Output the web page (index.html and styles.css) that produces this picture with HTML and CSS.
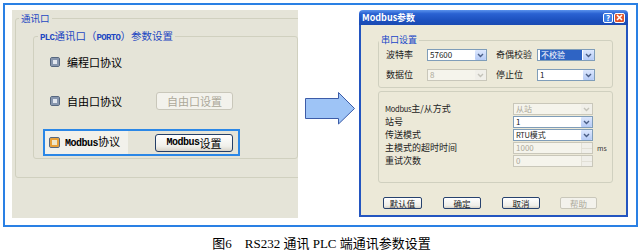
FILE: index.html
```html
<!DOCTYPE html>
<html lang="zh">
<head>
<meta charset="utf-8">
<title>RS232通讯PLC端通讯参数设置</title>
<link rel="stylesheet" href="styles.css">
</head>
<body>
<div class="frame">
  <div class="panel">
    <fieldset class="grp-outer">
      <legend>通讯口</legend>
      <fieldset class="grp-inner">
        <legend><span class="lat">PLC</span>通讯口（<span class="lat">PORTO</span>）参数设置</legend>
        <div class="row r1">
          <div class="chkcol"><span class="chk"></span><span class="lbl">编程口协议</span></div>
        </div>
        <div class="row r2">
          <div class="chkcol"><span class="chk"></span><span class="lbl">自由口协议</span></div>
          <div class="btn dis">自由口设置</div>
        </div>
        <div class="row r3">
          <div class="chkcol lite"><span class="chk hot"></span><span class="lbl"><b class="mono">Modbus</b>协议</span></div>
          <div class="btn act"><b class="mono">Modbus</b>设置</div>
        </div>
      </fieldset>
    </fieldset>
  </div>
  <div class="arrowcol">
    <svg width="51" height="33" viewBox="0 0 51 33">
      <polygon points="0.5,6.5 33.5,6.5 33.5,0.5 49.5,16.5 33.5,32 33.5,26.5 0.5,26.5" fill="#9EC4F6" stroke="#3C5CA8" stroke-width="1"/>
    </svg>
  </div>
  <div class="dlg">
    <div class="title">
      <span class="tt">Modbus参数</span>
      <span class="tb help">?</span>
      <span class="tb close"><svg width="7" height="7" viewBox="0 0 7 7"><path d="M1 1 L6 6 M6 1 L1 6" stroke="#fff" stroke-width="1.6"/></svg></span>
    </div>
    <div class="body">
      <fieldset class="g1">
        <legend>串口设置</legend>
        <div class="frow first">
          <span class="fl w41">波特率</span>
          <div class="cb w60"><span class="v">57600</span><span class="dd"><svg width="7" height="5" viewBox="0 0 7 5"><path d="M1 1 L3.5 3.5 L6 1" fill="none" stroke="#4A5E86" stroke-width="1.4"/></svg></span></div>
          <span class="fl w41 gap9">奇偶校验</span>
          <div class="cb w58"><span class="v"><span class="sel">不校验</span></span><span class="dd"><svg width="7" height="5" viewBox="0 0 7 5"><path d="M1 1 L3.5 3.5 L6 1" fill="none" stroke="#4A5E86" stroke-width="1.4"/></svg></span></div>
        </div>
        <div class="frow second">
          <span class="fl w41">数据位</span>
          <div class="cb w60 dis"><span class="v">8</span><span class="dd"><svg width="7" height="5" viewBox="0 0 7 5"><path d="M1 1 L3.5 3.5 L6 1" fill="none" stroke="#C4C3BA" stroke-width="1.4"/></svg></span></div>
          <span class="fl w41 gap9">停止位</span>
          <div class="cb w58"><span class="v">1</span><span class="dd"><svg width="7" height="5" viewBox="0 0 7 5"><path d="M1 1 L3.5 3.5 L6 1" fill="none" stroke="#4A5E86" stroke-width="1.4"/></svg></span></div>
        </div>
      </fieldset>
      <fieldset class="g2">
        <div class="mrow">
          <span class="ml"><span class="sm">Modbus</span>主/从方式</span>
          <div class="cb w80 dis"><span class="v">从站</span><span class="dd"><svg width="7" height="5" viewBox="0 0 7 5"><path d="M1 1 L3.5 3.5 L6 1" fill="none" stroke="#C4C3BA" stroke-width="1.4"/></svg></span></div>
        </div>
        <div class="mrow">
          <span class="ml">站号</span>
          <div class="cb w80"><span class="v">1</span><span class="dd"><svg width="7" height="5" viewBox="0 0 7 5"><path d="M1 1 L3.5 3.5 L6 1" fill="none" stroke="#4A5E86" stroke-width="1.4"/></svg></span></div>
        </div>
        <div class="mrow">
          <span class="ml">传送模式</span>
          <div class="cb w80"><span class="v"><span class="sm">RTU</span>模式</span><span class="dd"><svg width="7" height="5" viewBox="0 0 7 5"><path d="M1 1 L3.5 3.5 L6 1" fill="none" stroke="#4A5E86" stroke-width="1.4"/></svg></span></div>
        </div>
        <div class="mrow">
          <span class="ml">主模式的超时时间</span>
          <div class="cb w80 dis"><span class="v">1000</span><span class="spn"><span class="up"></span><span class="dn"></span></span></div>
          <span class="ms">ms</span>
        </div>
        <div class="mrow">
          <span class="ml">重试次数</span>
          <div class="cb w80 dis"><span class="v">0</span><span class="spn"><span class="up"></span><span class="dn"></span></span></div>
        </div>
      </fieldset>
      <div class="btns">
        <div class="dbtn b1">默认值</div>
        <div class="dbtn b2">确定</div>
        <div class="dbtn b3">取消</div>
        <div class="dbtn b4 off">帮助</div>
      </div>
    </div>
  </div>
</div>
<p class="cap">图6　RS232 通讯 PLC 端通讯参数设置</p>
</body>
</html>
```
FILE: styles.css
```css
* { box-sizing: border-box; }
html, body { margin: 0; padding: 0; background: #fff; }
body {
  font-family: "Noto Sans CJK SC", sans-serif;
  width: 643px;
  height: 251px;
  overflow: hidden;
  color: #000;
}

/* outer blue frame */
.frame {
  margin: 3px 0 0 3px;
  width: 635px;
  height: 224px;
  border: 2px solid #2A80E4;
  display: flex;
  align-items: flex-start;
  padding: 5px 0 0 7px;
}

/* left settings panel */
.panel {
  flex: none;
  width: 286px;
  height: 208px;
  background: #E5E4D8;
  overflow: hidden;
}
fieldset {
  margin: 0;
  min-width: 0;
  border: 1px solid #D0D0BF;
  border-radius: 3px;
}
legend {
  padding: 0 2px;
  height: 10px;
  line-height: 10px;
  white-space: nowrap;
}
.grp-outer {
  margin: 3px 0 0 3px;
  width: 300px;
  padding: 0 0 18px 3px;
}
.grp-outer > legend {
  font-size: 9.5px;
  color: #1D47C2;
}
.grp-inner {
  margin: 8px 0 0 14px;
  width: 265px;
  padding: 0 0 2px 4px;
}
.grp-inner > legend {
  font-size: 10.5px;
  color: #1D47C2;
}
.lat {
  font-family: "Liberation Mono", monospace;
  font-weight: bold;
  font-size: 9px;
  letter-spacing: -0.6px;
}
.row { display: flex; align-items: center; }
.r1 { height: 20px; margin-top: 11px; padding-left: 12px; }
.r2 { height: 20px; margin-top: 19px; padding-left: 12px; }
.r3 {
  height: 27px;
  width: 197px;
  margin: 18px 0 0 5px;
  border: 2px solid #2B87E6;
}
.chkcol { display: flex; align-items: center; width: 106px; flex: none; }
.chkcol.lite {
  width: 83px;
  height: 100%;
  background: #F2F1EB;
  padding-left: 4px;
  margin-right: 27px;
}
.chk {
  flex: none;
  width: 10px;
  height: 10px;
  border: 1px solid #56677F;
  border-radius: 2px;
  background: #E2E7EF;
  box-shadow: inset 0 0 0 2px #8796AE;
  margin-right: 7px;
}
.chk.hot {
  width: 11px;
  height: 11px;
  background: #F0E6C8;
  box-shadow: inset 0 0 0 2px #E8A038;
  margin-right: 5px;
}
.lbl { font-size: 11px; line-height: 14px; white-space: nowrap; }
.mono {
  font-family: "Liberation Mono", monospace;
  font-weight: bold;
  font-size: 10px;
  letter-spacing: -0.5px;
}
.btn {
  flex: none;
  height: 18px;
  border-radius: 3px;
  font-size: 11px;
  display: flex;
  align-items: center;
  justify-content: center;
  white-space: nowrap;
}
.btn.dis {
  width: 77px;
  border: 1px solid #C9C7BA;
  background: #F3F2EC;
  color: #ACA899;
}
.btn.act {
  width: 78px;
  border: 1px solid #243E66;
  background: linear-gradient(#FFFFFF, #F0EFEA 70%, #D9D4C9);
  color: #000;
}

/* arrow */
.arrowcol {
  flex: none;
  width: 61px;
  padding: 82px 0 0 7px;
}
.arrowcol svg { display: block; }

/* dialog */
.dlg {
  flex: none;
  width: 269px;
  height: 207px;
  display: flex;
  flex-direction: column;
}
.title {
  height: 15px;
  flex: none;
  border-radius: 4px 4px 0 0;
  background: linear-gradient(#5A92EC, #2A62D2 25%, #1C50BE 70%, #1A4AB2);
  display: flex;
  align-items: center;
  padding: 0 3px;
  color: #fff;
  font-weight: bold;
  font-size: 9px;
  line-height: 10px;
}
.title .tt { flex: 1; white-space: nowrap; }
.tb {
  width: 10px;
  height: 10px;
  border: 1px solid #fff;
  border-radius: 2px;
  display: flex;
  align-items: center;
  justify-content: center;
  font-size: 8px;
  line-height: 8px;
}
.help { background: #3F7FE6; margin-right: 1px; }
.close { width: 11px; background: #E0552C; }
.close svg { display: block; }
.body {
  flex: 1;
  background: #ECE9D8;
  border: 2px solid #2355C0;
  border-top: none;
  font-size: 9px;
  color: #222;
}
.g1 {
  margin: 10px 0 0 17px;
  width: 235px;
  padding: 0 0 6px 0;
}
.g1 > legend { font-size: 9px; color: #1846C8; }
.frow {
  display: flex;
  align-items: center;
  height: 12px;
  margin-left: 7px;
}
.frow.first { margin-top: 4px; }
.frow.second { margin-top: 8px; }
.fl { flex: none; white-space: nowrap; line-height: 12px; }
.w41 { width: 41px; }
.gap9 { margin-left: 9px; }
.w60 { width: 60px; }
.w58 { width: 58px; }
.w80 { width: 80px; }
.cb {
  flex: none;
  height: 12px;
  border: 1px solid #7F9DB9;
  background: #fff;
  display: flex;
  align-items: stretch;
}
.cb .v {
  flex: 1;
  display: flex;
  padding-left: 2px;
  font-size: 8px;
  line-height: 10px;
  overflow: hidden;
  white-space: nowrap;
}
.sel {
  flex: 1;
  background: #2F64C4;
  color: #fff;
  padding-left: 1px;
}
.cb .dd {
  flex: none;
  width: 11px;
  margin: 0 0 0 1px;
  background: linear-gradient(#DCE7FD, #B6CBF6);
  border-radius: 1px;
  display: flex;
  align-items: center;
  justify-content: center;
}
.cb .dd svg { display: block; }
.cb.dis { border-color: #C9C7BA; background: #F5F4EC; color: #ACA899; }
.cb.dis .dd { background: #F0EFE9; }
.spn {
  flex: none;
  width: 11px;
  display: flex;
  flex-direction: column;
}
.spn .up, .spn .dn {
  flex: 1;
  background: #F0EFE9;
  border-left: 1px solid #E2E0D6;
}
.spn .up { border-bottom: 1px solid #E2E0D6; }
.g2 {
  margin: 3px 0 0 17px;
  width: 235px;
  padding: 11px 0 15px 6px;
  display: flex;
  flex-direction: column;
  gap: 1px;
}
.mrow { display: flex; align-items: center; height: 12px; }
.ml { flex: none; width: 128px; white-space: nowrap; line-height: 12px; }
.sm { font-size: 7.5px; letter-spacing: -0.3px; }
.ms { font-size: 7px; margin-left: 4px; color: #333; }
.btns {
  display: flex;
  margin: 14px 0 0 22px;
}
.dbtn {
  flex: none;
  height: 12px;
  font-size: 8.5px;
  line-height: 10px;
  border: 1px solid #27426E;
  border-radius: 2px;
  background: linear-gradient(#FFFFFF, #EFEEE8 75%, #D8D3C8);
  display: flex;
  align-items: center;
  justify-content: center;
  white-space: nowrap;
}
.b1 { width: 39px; }
.b2 { width: 38px; margin-left: 21px; }
.b3 { width: 38px; margin-left: 21px; }
.b4 { width: 37px; margin-left: 20px; }
.dbtn.off { border-color: #C9C7BA; background: #F3F2EC; color: #ACA899; }

/* caption */
.cap {
  margin: 9px 0 0;
  text-align: center;
  font-family: "Liberation Serif", "Noto Sans CJK SC", serif;
  font-size: 13px;
  line-height: 15px;
  color: #000;
}
```
